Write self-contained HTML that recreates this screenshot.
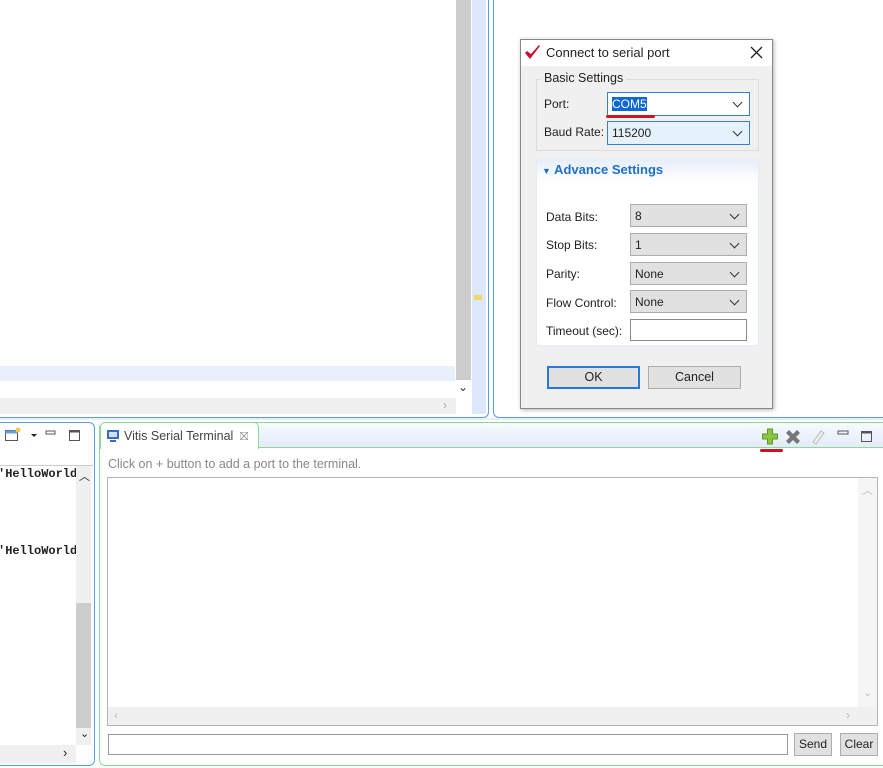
<!DOCTYPE html>
<html><head><meta charset="utf-8"><style>
*{box-sizing:border-box;margin:0;padding:0}
body{width:883px;height:768px;background:#fff;position:relative;overflow:hidden;font-family:"Liberation Sans","Noto Sans CJK KR",sans-serif;font-size:12px;color:#222}
.a{position:absolute}
.combo{position:absolute;border:1px solid #adadad;background:#e1e1e1;font-size:12px;padding:3px 4px;line-height:16px}
.combo:after{content:"";position:absolute;right:8px;top:6px;width:6px;height:6px;border-right:1.3px solid #333;border-bottom:1.3px solid #333;transform:rotate(45deg)}
.lbl{position:absolute;font-size:12px;color:#222}
.btn{position:absolute;background:#e1e1e1;border:1px solid #adadad;text-align:center;font-size:12.5px}
</style></head><body>
<div class="a" style="left:0;top:0;width:489px;height:418px;border:1.5px solid #5a9ee0;border-top:none;border-left:none;border-radius:0 0 6px 0;background:#fff"></div>
<div class="a" style="left:0;top:366px;width:455px;height:15px;background:#e8f0fc"></div>
<div class="a" style="left:456px;top:0;width:15px;height:380px;background:#cdcdcd"></div>
<div class="a" style="left:458px;top:380px;font-size:12px;color:#333">⌄</div>
<div class="a" style="left:0;top:398px;width:456px;height:16px;background:#f0f0f0"></div>
<div class="a" style="left:443px;top:398px;color:#aaa;font-size:12px">›</div>
<div class="a" style="left:472px;top:0;width:14px;height:414px;background:#dce8fb"></div>
<div class="a" style="left:474px;top:295px;width:8px;height:5px;background:#f2d66b"></div>
<div class="a" style="left:493px;top:0;width:390px;height:418px;border:1.5px solid #5a9ee0;border-top:none;border-right:none;border-radius:0 0 0 6px"></div>
<div class="a" style="left:0;top:418px;width:883px;height:2px;background:#e8eef8"></div>

<div class="a" style="left:520px;top:39px;width:253px;height:370px;border:1px solid #888;background:#f0f0f0;box-shadow:1px 1px 4px rgba(0,0,0,.3)"></div>
<div class="a" style="left:521px;top:40px;width:251px;height:26px;background:#fff"></div>
<svg class="a" style="left:524px;top:44px" width="18" height="18" viewBox="0 0 18 18"><path d="M1 9 L6 15 L16 2 L15 1 L7 10 L3 7Z" fill="#c8102e"/></svg>
<div class="a" style="left:546px;top:45px;font-size:13px">Connect to serial port</div>
<svg class="a" style="left:750px;top:46px" width="13" height="13"><path d="M1 1L12 12M12 1L1 12" stroke="#222" stroke-width="1.3"/></svg>
<div class="a" style="left:536px;top:79px;width:223px;height:72px;border:1px solid #dcdcdc"></div>
<div class="a" style="left:541px;top:71px;background:#f0f0f0;padding:0 3px;font-size:12.5px">Basic Settings</div>
<div class="lbl" style="left:544px;top:97px">Port:</div>
<div class="combo" style="left:607px;top:92px;width:143px;height:24px;background:#fff;border-color:#3c7fd1"><span style="background:#0b68d6;color:#fff">COM5</span></div>
<div class="a" style="left:606px;top:115px;width:49px;height:3px;background:#d0141e;border-radius:2px"></div>
<div class="lbl" style="left:544px;top:125px">Baud Rate:</div>
<div class="combo" style="left:607px;top:121px;width:143px;height:24px;background:#e5f1fb;border-color:#3c7fd1">115200</div>
<div class="a" style="left:536px;top:158px;width:223px;height:188px;background:#fff;border:1px solid #e4ecf7"></div>
<div class="a" style="left:537px;top:159px;width:221px;height:22px;background:linear-gradient(#e6eef9,#fff)"></div>
<div class="a" style="left:542px;top:162px;font-size:13px;font-weight:bold;color:#1f70c8"><span style="font-size:9px">▼</span> Advance Settings</div>
<div class="lbl" style="left:546px;top:210px">Data Bits:</div>
<div class="combo" style="left:630px;top:204px;width:117px;height:23px">8</div>
<div class="lbl" style="left:546px;top:238px">Stop Bits:</div>
<div class="combo" style="left:630px;top:233px;width:117px;height:23px">1</div>
<div class="lbl" style="left:546px;top:267px">Parity:</div>
<div class="combo" style="left:630px;top:262px;width:117px;height:23px">None</div>
<div class="lbl" style="left:546px;top:296px">Flow Control:</div>
<div class="combo" style="left:630px;top:290px;width:117px;height:23px">None</div>
<div class="lbl" style="left:546px;top:324px">Timeout (sec):</div>
<div class="a" style="left:630px;top:319px;width:117px;height:22px;border:1px solid #8a8a8a;background:#fff"></div>
<div class="btn" style="left:547px;top:366px;width:93px;height:23px;border:2px solid #2a79d6;line-height:19px">OK</div>
<div class="btn" style="left:648px;top:366px;width:93px;height:23px;line-height:21px">Cancel</div>

<div class="a" style="left:-6px;top:422px;width:101px;height:344px;border:1.5px solid #5a9ee0;border-radius:6px;background:#fff"></div>
<svg class="a" style="left:4px;top:427px" width="80" height="16"><rect x="1.5" y="3.5" width="12" height="10" fill="#fff" stroke="#555"/><rect x="1.5" y="3.5" width="12" height="3" fill="#6aa0dc"/><circle cx="14" cy="3" r="2.5" fill="#f2c94c"/><path d="M27 7 L33 7 L30 10Z" fill="#222"/><rect x="42" y="4" width="9" height="3" fill="none" stroke="#555"/><rect x="65.5" y="3.5" width="10" height="10" fill="none" stroke="#555"/><rect x="65.5" y="3.5" width="10" height="2" fill="#555"/></svg>
<div class="a" style="left:0;top:465px;width:93px;height:1px;background:#ccc"></div>
<div class="a" style="left:-2px;top:467px;font-family:'Liberation Mono',monospace;font-weight:bold;font-size:12px">'HelloWorld</div>
<div class="a" style="left:-2px;top:544px;font-family:'Liberation Mono',monospace;font-weight:bold;font-size:12px">'HelloWorld</div>
<div class="a" style="left:76px;top:466px;width:15px;height:279px;background:#f0f0f0"></div>
<div class="a" style="left:76px;top:603px;width:15px;height:125px;background:#cdcdcd"></div>
<div class="a" style="left:79px;top:468px;font-size:11px">︿</div>
<div class="a" style="left:80px;top:727px;font-size:11px">⌄</div>
<div class="a" style="left:0;top:745px;width:76px;height:18px;background:#f0f0f0"></div>
<div class="a" style="left:63px;top:745px;font-size:13px">›</div>

<div class="a" style="left:99px;top:422px;width:790px;height:344px;border:1.5px solid #8fd69a;border-radius:6px;background:#fff"></div>
<div class="a" style="left:100px;top:423px;width:783px;height:25px;background:linear-gradient(#f7fafe,#e3ecf8);border-bottom:1px solid #8fd69a"></div>
<div class="a" style="left:100px;top:422px;width:159px;height:27px;background:#fff;border:1.5px solid #8fd69a;border-bottom:none;border-radius:5px 5px 0 0"></div>
<svg class="a" style="left:106px;top:429px" width="14" height="14"><rect x="1" y="1" width="12" height="9" fill="#3a6fb8"/><rect x="3" y="3" width="8" height="5" fill="#cfe0f5"/><rect x="4" y="11" width="6" height="2" fill="#3a6fb8"/></svg>
<div class="a" style="left:124px;top:429px;font-size:12.5px;color:#444">Vitis Serial Terminal <span style="color:#888;font-size:11px">&nbsp;⛝</span></div>
<svg class="a" style="left:760px;top:427px" width="120" height="18"><path d="M7.5 2h5v5h5v5h-5v5h-5v-5h-5v-5h5z" fill="#8cc63f" stroke="#5a9a2a"/><path d="M29 3l4 4 4-4 3 3-4 4 4 4-3 3-4-4-4 4-3-3 4-4-4-4z" fill="#777"/><path d="M53 15l8-11 3 2-8 11z" fill="#eee" stroke="#bbb"/><rect x="78" y="4" width="10" height="3" fill="none" stroke="#555"/><rect x="101.5" y="4.5" width="10" height="10" fill="none" stroke="#555"/><rect x="101.5" y="4.5" width="10" height="2" fill="#555"/></svg>
<div class="a" style="left:760px;top:449px;width:23px;height:3px;background:#d0141e;border-radius:2px"></div>
<div class="a" style="left:108px;top:457px;font-size:12.5px;color:#888">Click on + button to add a port to the terminal.</div>
<div class="a" style="left:107px;top:477px;width:771px;height:249px;border:1px solid #b5b5b5;background:#fff"></div>
<div class="a" style="left:858px;top:478px;width:19px;height:229px;background:#f5f5f5"></div>
<div class="a" style="left:108px;top:707px;width:769px;height:18px;background:#f0f0f0"></div>
<div class="a" style="left:114px;top:708px;color:#bbb;font-size:12px">‹</div>
<div class="a" style="left:846px;top:708px;color:#bbb;font-size:12px">›</div>
<div class="a" style="left:862px;top:482px;color:#bbb;font-size:11px">︿</div>
<div class="a" style="left:863px;top:686px;color:#bbb;font-size:11px">⌄</div>
<div class="a" style="left:108px;top:734px;width:680px;height:21px;border:1px solid #999;background:#fff"></div>
<div class="btn" style="left:794px;top:733px;width:38px;height:23px;line-height:21px;font-size:12px">Send</div>
<div class="btn" style="left:840px;top:733px;width:38px;height:23px;line-height:21px;font-size:12px">Clear</div>
</body></html>
